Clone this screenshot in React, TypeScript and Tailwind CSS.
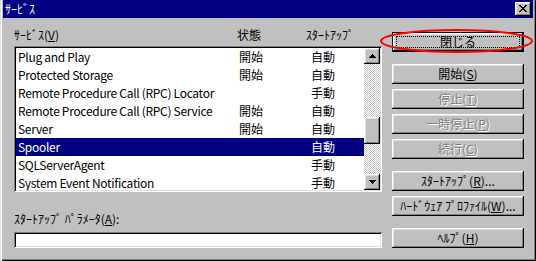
import type { ReactNode } from 'react';

const raised =
  'shadow-[inset_-1px_-1px_#000,inset_1px_1px_#fff,inset_-2px_-2px_#808080,inset_2px_2px_#dfdfdf]';
const sunken =
  'shadow-[inset_1px_1px_#808080,inset_-1px_-1px_#fff,inset_2px_2px_#000,inset_-2px_-2px_#dfdfdf]';

interface ServiceRow {
  name: string;
  status: string;
  startup: string;
}

const services: ServiceRow[] = [
  { name: 'Plug and Play', status: '開始', startup: '自動' },
  { name: 'Protected Storage', status: '開始', startup: '自動' },
  { name: 'Remote Procedure Call (RPC) Locator', status: '', startup: '手動' },
  { name: 'Remote Procedure Call (RPC) Service', status: '開始', startup: '自動' },
  { name: 'Server', status: '開始', startup: '自動' },
  { name: 'Spooler', status: '', startup: '自動' },
  { name: 'SQLServerAgent', status: '', startup: '手動' },
  { name: 'System Event Notification', status: '', startup: '手動' },
];

function Key({ children }: { children: ReactNode }) {
  return <span className="underline underline-offset-1">{children}</span>;
}

function DlgButton({
  children,
  disabled = false,
  className = '',
}: {
  children: ReactNode;
  disabled?: boolean;
  className?: string;
}) {
  return (
    <div
      className={`flex h-[20px] w-[132px] items-center justify-center bg-[#c0c0c0] ${raised} ${
        disabled ? 'text-[#808080] [text-shadow:1px_1px_0_#fff]' : 'text-black'
      } ${className}`}
    >
      {children}
    </div>
  );
}

function Arrow({ up }: { up: boolean }) {
  return (
    <div className={`flex h-[16px] w-[16px] items-center justify-center bg-[#c0c0c0] ${raised}`}>
      <svg width="7" height="4" viewBox="0 0 7 4" className={up ? '' : 'rotate-180'}>
        <path d="M3 0h1v1h1v1h1v1h1v1H0V3h1V2h1V1h1z" fill="#000" />
      </svg>
    </div>
  );
}

export default function App() {
  return (
    <div
      className={`relative h-[261px] w-[536px] overflow-hidden bg-[#c0c0c0] px-[3px] text-[12px] leading-[14px] text-black font-['Noto_Sans_CJK_JP',sans-serif] shadow-[inset_1px_0_#dfdfdf,inset_2px_0_#fff,inset_-1px_-1px_#000,inset_-2px_-2px_#808080]`}
    >
      {/* title bar */}
      <div className="flex h-[18px] items-center justify-between bg-[#000080] pl-[2px] pr-[2px]">
        <span className="text-white">ｻｰﾋﾞｽ</span>
        <div className={`flex h-[14px] w-[16px] items-center justify-center bg-[#c0c0c0] ${raised}`}>
          <svg width="8" height="7" viewBox="0 0 8 7" className="-mt-px">
            <path d="M0 0h2v1h1v1h2V1h1V0h2v1H7v1H6v1H5v1h1v1h1v1h1v1H6V6H5V5H3v1H2v1H0V6h1V5h1V4h1V3H2V2H1V1H0z" fill="#000" />
          </svg>
        </div>
      </div>

      <div className="flex gap-[10px] pl-[11px]">
        {/* left column */}
        <div className="w-[368px]">
          <div className="mt-[10px] grid h-[18px] grid-cols-[223px_69px_1fr]">
            <span>
              ｻｰﾋﾞｽ(<Key>V</Key>)
            </span>
            <span>状態</span>
            <span>ｽﾀｰﾄｱｯﾌﾟ</span>
          </div>

          <div className={`flex h-[146px] bg-white p-[2px] ${sunken}`}>
            <div className="h-[142px] w-[348px] overflow-hidden">
              {services.map((s) => {
                const selected = s.name === 'Spooler';
                return (
                  <div
                    key={s.name}
                    className={`grid h-[18px] grid-cols-[221px_72px_1fr] items-center pl-[2px] ${
                      selected ? 'bg-[#000080] text-white' : ''
                    }`}
                  >
                    <span className="whitespace-nowrap tracking-[-0.3px]">{s.name}</span>
                    <span>{s.status}</span>
                    <span>{s.startup}</span>
                  </div>
                );
              })}
            </div>
            <div className="flex h-[142px] w-[16px] flex-col">
              <Arrow up />
              <div className="flex flex-1 flex-col bg-[conic-gradient(#fff_25%,#c0c0c0_0_50%,#fff_0_75%,#c0c0c0_0)] bg-[length:2px_2px]">
                <div className="h-[53px]" />
                <div className={`h-[27px] w-[16px] bg-[#c0c0c0] ${raised}`} />
              </div>
              <Arrow up={false} />
            </div>
          </div>

          <div className="mt-[20px] h-[14px]">
            ｽﾀｰﾄｱｯﾌﾟ ﾊﾟﾗﾒｰﾀ(<Key>A</Key>):
          </div>
          <div className={`mt-[6px] h-[16px] bg-white ${sunken}`} />
        </div>

        {/* right column */}
        <div className="flex w-[132px] flex-col pt-[14px]">
          <div className="flex h-[20px] w-[132px] border border-black bg-[#c0c0c0]">
            <div className={`flex flex-1 p-[3px] ${raised}`}>
              <div className="flex flex-1 items-center justify-center border border-dotted border-black">
                閉じる
              </div>
            </div>
          </div>
          <DlgButton className="mt-[12px]">
            開始(<Key>S</Key>)
          </DlgButton>
          <DlgButton disabled className="mt-[5px]">
            停止(<Key>T</Key>)
          </DlgButton>
          <DlgButton disabled className="mt-[5px]">
            一時停止(<Key>P</Key>)
          </DlgButton>
          <DlgButton disabled className="mt-[5px]">
            続行(<Key>C</Key>)
          </DlgButton>
          <DlgButton className="mt-[12px]">
            ｽﾀｰﾄｱｯﾌﾟ(<Key>R</Key>)...
          </DlgButton>
          <DlgButton className="mt-[5px]">
            ﾊｰﾄﾞｳｪｱ ﾌﾟﾛﾌｧｲﾙ(<Key>W</Key>)...
          </DlgButton>
          <DlgButton className="mt-[12px]">
            ﾍﾙﾌﾟ(<Key>H</Key>)
          </DlgButton>
        </div>
      </div>

      {/* red annotation ellipse */}
      <svg className="pointer-events-none absolute left-[378px] top-[26px]" width="158" height="30" viewBox="0 0 158 30">
        <ellipse cx="78.5" cy="15" rx="75.5" ry="11" fill="none" stroke="#ff0000" strokeWidth="2" />
      </svg>
    </div>
  );
}
